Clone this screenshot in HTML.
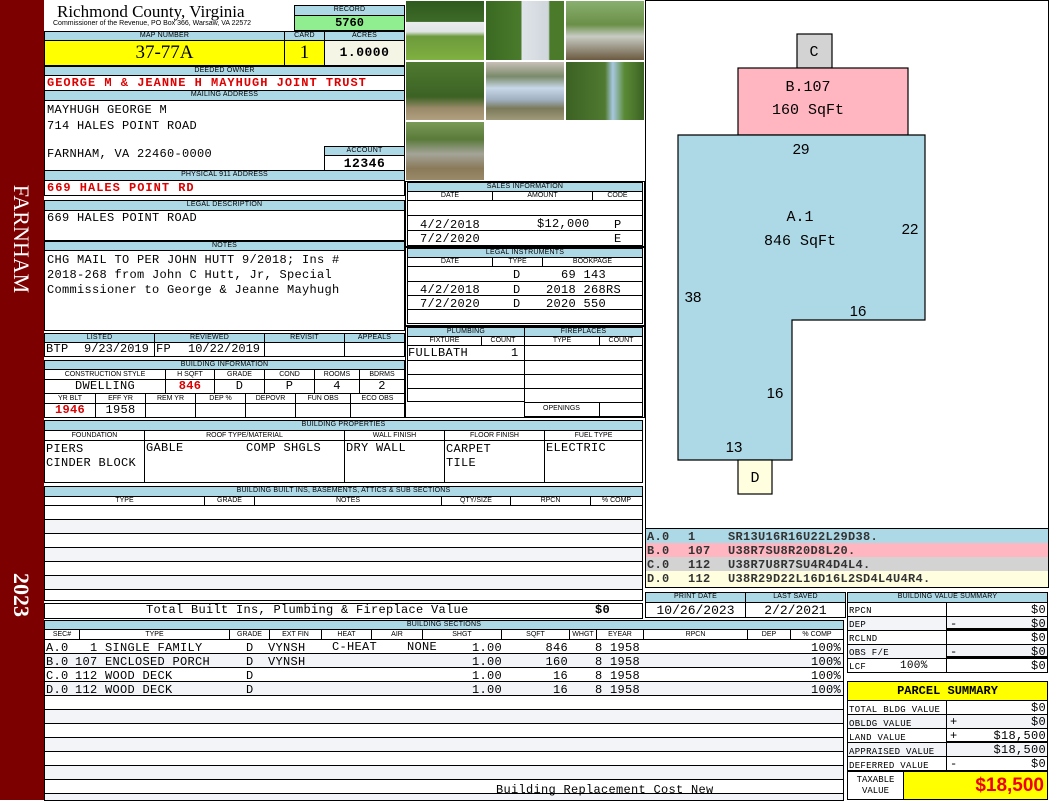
<!DOCTYPE html><html><head><meta charset="utf-8"><style>
*{box-sizing:border-box;margin:0;padding:0}
body{width:1050px;height:800px;position:relative;background:#fff;overflow:hidden;font-family:"Liberation Mono",monospace}
div{position:absolute}
.h{background:#add8e6;border:1px solid #000;font:7px/8px "Liberation Sans",sans-serif;text-align:center;color:#000;letter-spacing:.2px}
.b{border:1px solid #000;background:#fff}
.t{font:12px/13px "Liberation Mono",monospace;letter-spacing:.3px;white-space:pre;color:#000}
.r{color:#d00;font-weight:bold}
.ph{border:1px solid #fff}
.bx{border:1px solid #000}
.rt{text-align:right}
</style></head><body>
<div style="left:0;top:0;width:44px;height:800px;background:#7d0000"></div>
<div style="left:-43px;top:227px;width:130px;height:24px;transform:rotate(90deg);color:#fff;font:22px 'Liberation Serif',serif;text-align:center">FARNHAM</div>
<div style="left:-10px;top:583px;width:64px;height:24px;transform:rotate(90deg);color:#fff;font:bold 22px 'Liberation Serif',serif;text-align:center">2023</div>

<div style="left:57px;top:2px;font:17px 'Liberation Serif',serif">Richmond County, Virginia</div>
<div style="left:53px;top:20px;font:7px 'Liberation Sans',sans-serif;white-space:nowrap">Commissioner of the Revenue, PO Box 366, Warsaw, VA 22572</div>
<div class="h" style="left:294px;top:5px;width:111px;height:11px">RECORD</div>
<div class="bx" style="left:294px;top:15px;width:111px;height:16px;background:#90ee90;font:bold 12px/14px 'Liberation Mono';text-align:center">5760</div>

<div class="h" style="left:44px;top:31px;width:241px;height:10px">MAP NUMBER</div>
<div class="h" style="left:284px;top:31px;width:41px;height:10px">CARD</div>
<div class="h" style="left:324px;top:31px;width:81px;height:10px">ACRES</div>
<div class="bx" style="left:44px;top:40px;width:241px;height:26px;background:#ff0;font:19px/24px 'Liberation Serif',serif;text-align:center">37-77A</div>
<div class="bx" style="left:284px;top:40px;width:41px;height:26px;background:#ff0;font:19px/24px 'Liberation Serif',serif;text-align:center">1</div>
<div class="bx" style="left:324px;top:40px;width:81px;height:26px;background:#f5f5e6;font:bold 13px/24px 'Liberation Mono';text-align:center;letter-spacing:.5px">1.0000</div>

<div class="h" style="left:44px;top:66px;width:361px;height:10px">DEEDED OWNER</div>
<div class="b" style="left:44px;top:75px;width:361px;height:16px"></div>
<div class="t r" style="left:47px;top:77px;letter-spacing:1px">GEORGE M &amp; JEANNE H MAYHUGH JOINT TRUST</div>
<div class="h" style="left:44px;top:90px;width:361px;height:11px">MAILING ADDRESS</div>
<div class="b" style="left:44px;top:100px;width:361px;height:71px"></div>
<div class="t" style="left:47px;top:102px;line-height:16px">MAYHUGH GEORGE M
714 HALES POINT ROAD</div>
<div class="t" style="left:47px;top:148px">FARNHAM, VA 22460-0000</div>
<div class="h" style="left:324px;top:146px;width:81px;height:10px">ACCOUNT</div>
<div class="bx" style="left:324px;top:155px;width:81px;height:16px;font:bold 13px/15px 'Liberation Mono';text-align:center;background:#fff;letter-spacing:.5px">12346</div>
<div class="h" style="left:44px;top:170px;width:361px;height:11px">PHYSICAL 911 ADDRESS</div>
<div class="b" style="left:44px;top:180px;width:361px;height:16px"></div>
<div class="t r" style="left:47px;top:182px;letter-spacing:1px">669 HALES POINT RD</div>

<div class="h" style="left:44px;top:200px;width:361px;height:11px">LEGAL DESCRIPTION</div>
<div class="b" style="left:44px;top:210px;width:361px;height:31px"></div>
<div class="t" style="left:47px;top:212px">669 HALES POINT ROAD</div>
<div class="h" style="left:44px;top:241px;width:361px;height:10px">NOTES</div>
<div class="b" style="left:44px;top:250px;width:361px;height:81px"></div>
<div class="t" style="left:47px;top:253px;line-height:15px">CHG MAIL TO PER JOHN HUTT 9/2018; Ins #
2018-268 from John C Hutt, Jr, Special
Commissioner to George &amp; Jeanne Mayhugh</div>

<div class="h" style="left:44px;top:333px;width:111px;height:10px">LISTED</div>
<div class="h" style="left:154px;top:333px;width:111px;height:10px">REVIEWED</div>
<div class="h" style="left:264px;top:333px;width:81px;height:10px">REVISIT</div>
<div class="h" style="left:344px;top:333px;width:61px;height:10px">APPEALS</div>
<div class="bx" style="left:44px;top:342px;width:111px;height:15px"></div>
<div class="bx" style="left:154px;top:342px;width:111px;height:15px"></div>
<div class="bx" style="left:264px;top:342px;width:81px;height:15px"></div>
<div class="bx" style="left:344px;top:342px;width:61px;height:15px"></div>
<div class="t" style="left:46px;top:343px">BTP</div>
<div class="t" style="left:84px;top:343px;letter-spacing:0">9/23/2019</div>
<div class="t" style="left:156px;top:343px">FP</div>
<div class="t" style="left:188px;top:343px;letter-spacing:0">10/22/2019</div>

<div class="h" style="left:44px;top:360px;width:361px;height:10px">BUILDING INFORMATION</div>
<div class="bx" style="left:44px;top:369px;width:122px;height:11px;font:7px/9px 'Liberation Sans';text-align:center">CONSTRUCTION STYLE</div>
<div class="bx" style="left:165px;top:369px;width:50px;height:11px;font:7px/9px 'Liberation Sans';text-align:center">H SQFT</div>
<div class="bx" style="left:214px;top:369px;width:51px;height:11px;font:7px/9px 'Liberation Sans';text-align:center">GRADE</div>
<div class="bx" style="left:264px;top:369px;width:51px;height:11px;font:7px/9px 'Liberation Sans';text-align:center">COND</div>
<div class="bx" style="left:314px;top:369px;width:46px;height:11px;font:7px/9px 'Liberation Sans';text-align:center">ROOMS</div>
<div class="bx" style="left:359px;top:369px;width:46px;height:11px;font:7px/9px 'Liberation Sans';text-align:center">BDRMS</div>
<div class="bx" style="left:44px;top:379px;width:122px;height:15px"></div><div class="bx" style="left:165px;top:379px;width:50px;height:15px"></div><div class="bx" style="left:214px;top:379px;width:51px;height:15px"></div><div class="bx" style="left:264px;top:379px;width:51px;height:15px"></div><div class="bx" style="left:314px;top:379px;width:46px;height:15px"></div><div class="bx" style="left:359px;top:379px;width:46px;height:15px"></div>
<div class="t" style="left:44px;top:380px;width:122px;text-align:center">DWELLING</div>
<div class="t r" style="left:165px;top:380px;width:50px;text-align:center">846</div>
<div class="t" style="left:214px;top:380px;width:51px;text-align:center">D</div>
<div class="t" style="left:264px;top:380px;width:51px;text-align:center">P</div>
<div class="t" style="left:314px;top:380px;width:46px;text-align:center">4</div>
<div class="t" style="left:359px;top:380px;width:46px;text-align:center">2</div>
<div class="bx" style="left:44px;top:393px;width:52px;height:11px;font:7px/9px 'Liberation Sans';text-align:center">YR BLT</div>
<div class="bx" style="left:95px;top:393px;width:51px;height:11px;font:7px/9px 'Liberation Sans';text-align:center">EFF YR</div>
<div class="bx" style="left:145px;top:393px;width:51px;height:11px;font:7px/9px 'Liberation Sans';text-align:center">REM YR</div>
<div class="bx" style="left:195px;top:393px;width:51px;height:11px;font:7px/9px 'Liberation Sans';text-align:center">DEP %</div>
<div class="bx" style="left:245px;top:393px;width:51px;height:11px;font:7px/9px 'Liberation Sans';text-align:center">DEPOVR</div>
<div class="bx" style="left:295px;top:393px;width:56px;height:11px;font:7px/9px 'Liberation Sans';text-align:center">FUN OBS</div>
<div class="bx" style="left:350px;top:393px;width:55px;height:11px;font:7px/9px 'Liberation Sans';text-align:center">ECO OBS</div>
<div class="bx" style="left:44px;top:403px;width:52px;height:15px"></div><div class="bx" style="left:95px;top:403px;width:51px;height:15px"></div><div class="bx" style="left:145px;top:403px;width:51px;height:15px"></div><div class="bx" style="left:195px;top:403px;width:51px;height:15px"></div><div class="bx" style="left:245px;top:403px;width:51px;height:15px"></div><div class="bx" style="left:295px;top:403px;width:56px;height:15px"></div><div class="bx" style="left:350px;top:403px;width:55px;height:15px"></div>
<div class="t r" style="left:44px;top:404px;width:52px;text-align:center">1946</div>
<div class="t" style="left:95px;top:404px;width:51px;text-align:center">1958</div>

<!-- photos -->
<div class="ph" style="left:405px;top:0;width:80px;height:61px;background:linear-gradient(#2e5a1e 0,#3d6a28 35%,#e8ecec 36%,#e0e4e4 52%,#6c9a3c 60%,#7fb040 100%)"></div>
<div class="ph" style="left:485px;top:0;width:80px;height:61px;background:linear-gradient(90deg,#3a6a22 0,#4a7a2a 45%,#dfe4e8 46%,#cfd6dc 80%,#4a7a2a 82%)"></div>
<div class="ph" style="left:565px;top:0;width:80px;height:61px;background:linear-gradient(#8ab070 0,#6a8f48 40%,#c8ccc4 60%,#6b5a40 100%)"></div>
<div class="ph" style="left:405px;top:61px;width:80px;height:60px;background:linear-gradient(#4f7a30 0,#3c6224 60%,#9a8a6a 80%,#b0a080 100%)"></div>
<div class="ph" style="left:485px;top:61px;width:80px;height:60px;background:linear-gradient(#c8c0b8 0,#7a8a6a 25%,#c8d8e8 45%,#a0b0c0 65%,#7a7a5a 80%,#a09a7a 100%)"></div>
<div class="ph" style="left:565px;top:61px;width:80px;height:60px;background:linear-gradient(90deg,#3c6224 0,#4f7a30 50%,#a8c8e0 60%,#5a8a34 75%,#3c6224 100%)"></div>
<div class="ph" style="left:405px;top:121px;width:80px;height:60px;background:linear-gradient(#7a9a58 0,#5a7a3a 30%,#a4a498 55%,#8a7a5a 80%,#9a8a6a 100%)"></div>

<!-- sales -->
<div class="bx" style="left:405px;top:181px;width:240px;height:66px;background:#fff"></div>
<div class="h" style="left:407px;top:182px;width:236px;height:10px">SALES INFORMATION</div>
<div class="bx" style="left:407px;top:191px;width:86px;height:10px;font:7px/8px 'Liberation Sans';text-align:center">DATE</div>
<div class="bx" style="left:492px;top:191px;width:101px;height:10px;font:7px/8px 'Liberation Sans';text-align:center">AMOUNT</div>
<div class="bx" style="left:592px;top:191px;width:51px;height:10px;font:7px/8px 'Liberation Sans';text-align:center">CODE</div>
<div class="bx" style="left:407px;top:200px;width:236px;height:46px"></div>
<div style="left:407px;top:215px;width:236px;border-top:1px solid #000"></div>
<div style="left:407px;top:230px;width:236px;border-top:1px solid #000"></div>
<div class="t" style="left:420px;top:218px;line-height:14px">4/2/2018
7/2/2020</div>
<div class="t" style="left:537px;top:218px">$12,000</div>
<div class="t" style="left:614px;top:218px;line-height:14px">P
E</div>

<div class="bx" style="left:405px;top:247px;width:240px;height:79px;background:#fff"></div>
<div class="h" style="left:407px;top:248px;width:236px;height:10px">LEGAL INSTRUMENTS</div>
<div class="bx" style="left:407px;top:257px;width:86px;height:10px;font:7px/8px 'Liberation Sans';text-align:center">DATE</div>
<div class="bx" style="left:492px;top:257px;width:51px;height:10px;font:7px/8px 'Liberation Sans';text-align:center">TYPE</div>
<div class="bx" style="left:542px;top:257px;width:101px;height:10px;font:7px/8px 'Liberation Sans';text-align:center">BOOKPAGE</div>
<div class="bx" style="left:407px;top:266px;width:236px;height:58px"></div>
<div style="left:407px;top:281px;width:236px;border-top:1px solid #000"></div>
<div style="left:407px;top:295px;width:236px;border-top:1px solid #000"></div>
<div style="left:407px;top:309px;width:236px;border-top:1px solid #000"></div>
<div class="t" style="left:420px;top:268px;line-height:14.5px">
4/2/2018
7/2/2020</div>
<div class="t" style="left:513px;top:268px;line-height:14.5px">D
D
D</div>
<div class="t" style="left:531px;top:268px;line-height:14.5px">    69 143
  2018 268RS
  2020 550</div>

<div class="bx" style="left:405px;top:326px;width:240px;height:92px;background:#fff"></div>
<div class="h" style="left:407px;top:327px;width:118px;height:10px">PLUMBING</div>
<div class="h" style="left:524px;top:327px;width:119px;height:10px">FIREPLACES</div>
<div class="bx" style="left:407px;top:336px;width:75px;height:10px;font:7px/8px 'Liberation Sans';text-align:center">FIXTURE</div>
<div class="bx" style="left:481px;top:336px;width:44px;height:10px;font:7px/8px 'Liberation Sans';text-align:center">COUNT</div>
<div class="bx" style="left:524px;top:336px;width:76px;height:10px;font:7px/8px 'Liberation Sans';text-align:center">TYPE</div>
<div class="bx" style="left:599px;top:336px;width:44px;height:10px;font:7px/8px 'Liberation Sans';text-align:center">COUNT</div>
<div class="bx" style="left:407px;top:345px;width:118px;height:57px"></div>
<div class="bx" style="left:524px;top:345px;width:119px;height:72px"></div>
<div style="left:407px;top:360px;width:236px;border-top:1px solid #000"></div>
<div style="left:407px;top:374px;width:236px;border-top:1px solid #000"></div>
<div style="left:407px;top:388px;width:236px;border-top:1px solid #000"></div>
<div style="left:524px;top:402px;width:119px;border-top:1px solid #000"></div>
<div style="left:599px;top:402px;height:15px;border-left:1px solid #000"></div>
<div style="left:524px;top:405px;width:75px;font:7px 'Liberation Sans';text-align:center">OPENINGS</div>
<div class="t" style="left:408px;top:347px">FULLBATH</div>
<div class="t" style="left:511px;top:347px">1</div>

<!-- building properties -->
<div class="h" style="left:44px;top:420px;width:599px;height:11px">BUILDING PROPERTIES</div>
<div class="bx" style="left:44px;top:430px;width:101px;height:11px;font:7px/9px 'Liberation Sans';text-align:center">FOUNDATION</div>
<div class="bx" style="left:144px;top:430px;width:201px;height:11px;font:7px/9px 'Liberation Sans';text-align:center">ROOF TYPE/MATERIAL</div>
<div class="bx" style="left:344px;top:430px;width:101px;height:11px;font:7px/9px 'Liberation Sans';text-align:center">WALL FINISH</div>
<div class="bx" style="left:444px;top:430px;width:101px;height:11px;font:7px/9px 'Liberation Sans';text-align:center">FLOOR FINISH</div>
<div class="bx" style="left:544px;top:430px;width:99px;height:11px;font:7px/9px 'Liberation Sans';text-align:center">FUEL TYPE</div>
<div class="bx" style="left:44px;top:440px;width:101px;height:43px"></div><div class="bx" style="left:144px;top:440px;width:201px;height:43px"></div><div class="bx" style="left:344px;top:440px;width:101px;height:43px"></div><div class="bx" style="left:444px;top:440px;width:101px;height:43px"></div><div class="bx" style="left:544px;top:440px;width:99px;height:43px"></div>
<div class="t" style="left:46px;top:442px;line-height:14px">PIERS
CINDER BLOCK</div>
<div class="t" style="left:146px;top:442px">GABLE</div>
<div class="t" style="left:246px;top:442px">COMP SHGLS</div>
<div class="t" style="left:346px;top:442px">DRY WALL</div>
<div class="t" style="left:446px;top:442px;line-height:14px">CARPET
TILE</div>
<div class="t" style="left:546px;top:442px">ELECTRIC</div>

<!-- built ins -->
<div class="h" style="left:44px;top:486px;width:599px;height:11px">BUILDING BUILT INS, BASEMENTS, ATTICS &amp; SUB SECTIONS</div>
<div class="bx" style="left:44px;top:496px;width:161px;height:10px;font:7px/8px 'Liberation Sans';text-align:center">TYPE</div>
<div class="bx" style="left:204px;top:496px;width:51px;height:10px;font:7px/8px 'Liberation Sans';text-align:center">GRADE</div>
<div class="bx" style="left:254px;top:496px;width:188px;height:10px;font:7px/8px 'Liberation Sans';text-align:center">NOTES</div>
<div class="bx" style="left:441px;top:496px;width:70px;height:10px;font:7px/8px 'Liberation Sans';text-align:center">QTY/SIZE</div>
<div class="bx" style="left:510px;top:496px;width:81px;height:10px;font:7px/8px 'Liberation Sans';text-align:center">RPCN</div>
<div class="bx" style="left:590px;top:496px;width:53px;height:10px;font:7px/8px 'Liberation Sans';text-align:center">% COMP</div>
<div class="bx" style="left:44px;top:505px;width:599px;height:96px;background:repeating-linear-gradient(#fff 0,#fff 13px,#000 13px,#000 14px,#f2f4f8 14px,#f2f4f8 27px,#000 27px,#000 28px)"></div>
<div class="bx" style="left:44px;top:603px;width:599px;height:16px"></div>
<div class="t" style="left:146px;top:604px">Total Built Ins, Plumbing &amp; Fireplace Value</div>
<div class="t" style="left:595px;top:604px;font-weight:bold">$0</div>

<!-- building sections -->
<div class="h" style="left:44px;top:620px;width:800px;height:10px">BUILDING SECTIONS</div>
<div class="bx" style="left:44px;top:629px;width:36px;height:11px;font:7px/9px 'Liberation Sans';text-align:center">SEC#</div>
<div class="bx" style="left:79px;top:629px;width:151px;height:11px;font:7px/9px 'Liberation Sans';text-align:center">TYPE</div>
<div class="bx" style="left:229px;top:629px;width:41px;height:11px;font:7px/9px 'Liberation Sans';text-align:center">GRADE</div>
<div class="bx" style="left:269px;top:629px;width:53px;height:11px;font:7px/9px 'Liberation Sans';text-align:center">EXT FIN</div>
<div class="bx" style="left:321px;top:629px;width:51px;height:11px;font:7px/9px 'Liberation Sans';text-align:center">HEAT</div>
<div class="bx" style="left:371px;top:629px;width:52px;height:11px;font:7px/9px 'Liberation Sans';text-align:center">AIR</div>
<div class="bx" style="left:422px;top:629px;width:80px;height:11px;font:7px/9px 'Liberation Sans';text-align:center">SHGT</div>
<div class="bx" style="left:501px;top:629px;width:69px;height:11px;font:7px/9px 'Liberation Sans';text-align:center">SQFT</div>
<div class="bx" style="left:569px;top:629px;width:28px;height:11px;font:7px/9px 'Liberation Sans';text-align:center">WHGT</div>
<div class="bx" style="left:596px;top:629px;width:48px;height:11px;font:7px/9px 'Liberation Sans';text-align:center">EYEAR</div>
<div class="bx" style="left:643px;top:629px;width:105px;height:11px;font:7px/9px 'Liberation Sans';text-align:center">RPCN</div>
<div class="bx" style="left:747px;top:629px;width:44px;height:11px;font:7px/9px 'Liberation Sans';text-align:center">DEP</div>
<div class="bx" style="left:790px;top:629px;width:54px;height:11px;font:7px/9px 'Liberation Sans';text-align:center">% COMP</div>
<div class="bx" style="left:44px;top:639px;width:800px;height:162px;background:repeating-linear-gradient(#fff 0,#fff 13px,#000 13px,#000 14px,#f2f4f8 14px,#f2f4f8 27px,#000 27px,#000 28px)"></div>
<div class="t" style="left:46px;top:641px;line-height:14px">A.0
B.0
C.0
D.0</div>
<div class="t" style="left:75px;top:641px;line-height:14px">  1 SINGLE FAMILY
107 ENCLOSED PORCH
112 WOOD DECK
112 WOOD DECK</div>
<div class="t" style="left:246px;top:641px;line-height:14px">D
D
D
D</div>
<div class="t" style="left:268px;top:641px;line-height:14px">VYNSH
VYNSH</div>
<div class="t" style="left:332px;top:641px">C-HEAT</div>
<div class="t" style="left:407px;top:641px">NONE</div>
<div class="t" style="left:472px;top:641px;line-height:14px">1.00
1.00
1.00
1.00</div>
<div class="t rt" style="left:520px;top:641px;width:48px;line-height:14px">846
160
16
16</div>
<div class="t" style="left:595px;top:641px;line-height:14px">8 1958
8 1958
8 1958
8 1958</div>
<div class="t rt" style="left:780px;top:641px;width:61px;line-height:14px">100%
100%
100%
100%</div>
<div class="t" style="left:496px;top:784px">Building Replacement Cost New</div>

<!-- sketch -->
<div class="bx" style="left:645px;top:0;width:404px;height:529px"></div>
<svg style="position:absolute;left:0;top:0" width="1050" height="529">
<rect x="797" y="34" width="35" height="34" fill="#d3d3d3" stroke="#000" stroke-width="1.2"/>
<rect x="738" y="68" width="170" height="67" fill="#ffb6c1" stroke="#000" stroke-width="1.2"/>
<polygon points="678,135 925,135 925,320 792,320 792,460 678,460" fill="#add8e6" stroke="#000" stroke-width="1.2"/>
<rect x="738" y="460" width="34" height="34" fill="#ffffe0" stroke="#000" stroke-width="1.2"/>
<g font-family="Liberation Mono" font-size="15" text-anchor="middle">
<text x="814" y="56">C</text><text x="808" y="91">B.107</text><text x="808" y="114">160 SqFt</text>
<text x="800" y="221">A.1</text><text x="800" y="245">846 SqFt</text><text x="755" y="482">D</text></g>
<g font-family="Liberation Sans" font-size="15" text-anchor="middle">
<text x="801" y="154">29</text><text x="910" y="234">22</text><text x="693" y="302">38</text><text x="858" y="316">16</text><text x="775" y="398">16</text><text x="734" y="452">13</text></g>
</svg>
<div class="bx" style="left:645px;top:528px;width:404px;height:60px"></div>
<div style="left:646px;top:529px;width:402px;height:15px;background:#add8e6"></div>
<div style="left:646px;top:543px;width:402px;height:15px;background:#ffb6c1"></div>
<div style="left:646px;top:557px;width:402px;height:15px;background:#d3d3d3"></div>
<div style="left:646px;top:571px;width:402px;height:16px;background:#ffffe0"></div>
<div class="t" style="left:647px;top:530px;line-height:14px;font-weight:bold;color:#333">A.0
B.0
C.0
D.0</div>
<div class="t" style="left:688px;top:530px;line-height:14px;font-weight:bold;color:#333">1
107
112
112</div>
<div class="t" style="left:728px;top:530px;line-height:14px;font-weight:bold;color:#333">SR13U16R16U22L29D38.
U38R7SU8R20D8L20.
U38R7U8R7SU4R4D4L4.
U38R29D22L16D16L2SD4L4U4R4.</div>

<div class="h" style="left:645px;top:592px;width:101px;height:11px">PRINT DATE</div>
<div class="h" style="left:745px;top:592px;width:101px;height:11px">LAST SAVED</div>
<div class="bx" style="left:645px;top:602px;width:101px;height:16px;font:13px/15px 'Liberation Mono';text-align:center">10/26/2023</div>
<div class="bx" style="left:745px;top:602px;width:101px;height:16px;font:13px/15px 'Liberation Mono';text-align:center">2/2/2021</div>

<div class="h" style="left:847px;top:592px;width:201px;height:11px">BUILDING VALUE SUMMARY</div>
<div class="bx" style="left:847px;top:602px;width:201px;height:71px;background:repeating-linear-gradient(#fff 0,#fff 13px,#000 13px,#000 14px,#f2f4f8 14px,#f2f4f8 27px,#000 27px,#000 28px)"></div>
<div style="left:946px;top:602px;height:71px;border-left:1px solid #000"></div>
<div style="left:946px;top:628px;width:102px;border-top:2px solid #000"></div>
<div style="left:946px;top:656px;width:102px;border-top:2px solid #000"></div>
<div class="t" style="left:849px;top:604px;font-size:9px;line-height:14px">RPCN
DEP
RCLND
OBS F/E
LCF</div>
<div class="t" style="left:900px;top:660px;font-size:11px">100%</div>
<div class="t" style="left:950px;top:603px;line-height:14px">
-

-</div>
<div class="t rt" style="left:960px;top:603px;width:86px;line-height:14px">$0
$0
$0
$0
$0</div>

<div class="bx" style="left:847px;top:681px;width:201px;height:20px;background:#ff0;font:bold 12px/18px 'Liberation Mono';text-align:center">PARCEL SUMMARY</div>
<div class="bx" style="left:847px;top:700px;width:201px;height:72px;background:repeating-linear-gradient(#fff 0,#fff 13px,#000 13px,#000 14px,#f2f4f8 14px,#f2f4f8 27px,#000 27px,#000 28px)"></div>
<div style="left:946px;top:700px;height:72px;border-left:1px solid #000"></div>
<div style="left:946px;top:741px;width:102px;border-top:2px solid #000"></div>
<div class="t" style="left:849px;top:703px;font-size:9px;line-height:14px">TOTAL BLDG VALUE
OBLDG VALUE
LAND VALUE
APPRAISED VALUE
DEFERRED VALUE</div>
<div class="t" style="left:950px;top:701px;line-height:14px">
+
+

-</div>
<div class="t rt" style="left:960px;top:701px;width:86px;line-height:14px">$0
$0
$18,500
$18,500
$0</div>
<div class="bx" style="left:847px;top:771px;width:57px;height:29px;font:9px/11px 'Liberation Mono';text-align:center;padding-top:3px">TAXABLE<br>VALUE</div>
<div class="bx" style="left:903px;top:771px;width:145px;height:29px;background:#ff0;color:#e00;font:bold 19px/27px 'Liberation Sans';text-align:right;padding-right:3px">$18,500</div>
</body></html>
